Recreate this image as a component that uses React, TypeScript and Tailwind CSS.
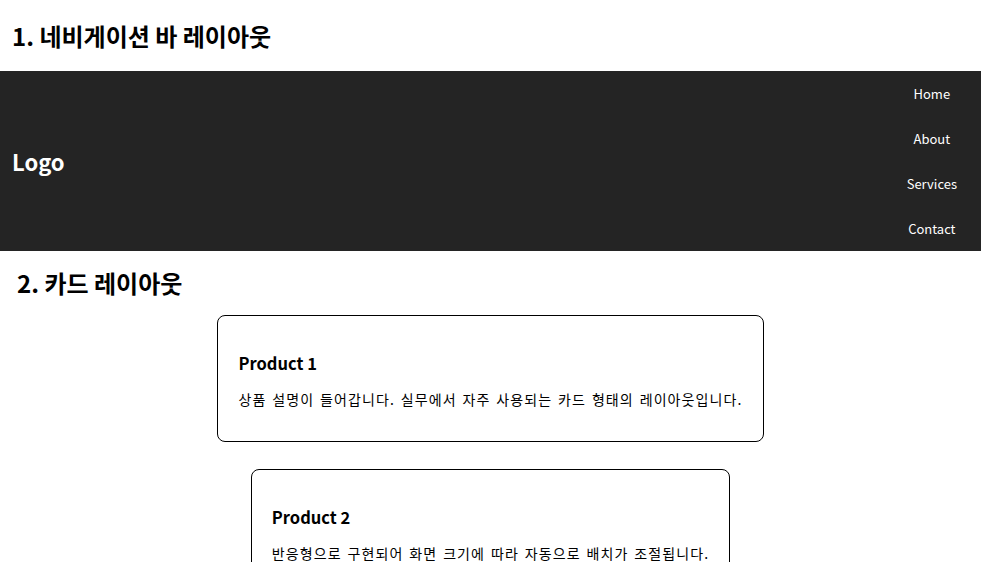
import React from "react";

const font = { fontFamily: '"Noto Sans CJK KR", "Noto Sans", sans-serif' };

const products = [
  { title: "Product 1", desc: "상품 설명이 들어갑니다. 실무에서 자주 사용되는 카드 형태의 레이아웃입니다." },
  { title: "Product 2", desc: "반응형으로 구현되어 화면 크기에 따라 자동으로 배치가 조절됩니다." },
];

export default function App() {
  return (
    <div className="bg-white text-black" style={font}>
      <h2 className="mt-5 mb-5 pl-3 text-2xl font-bold leading-[31px]">1. 네비게이션 바 레이아웃</h2>

      <nav className="flex items-center justify-between bg-[#242424] pl-3 pr-[10px] text-white">
        <div className="text-[22px] font-bold">Logo</div>
        <ul className="flex flex-col items-center">
          {["Home", "About", "Services", "Contact"].map((item) => (
            <li key={item} className="flex h-[45px] items-center px-[14px] text-[13px]">
              {item}
            </li>
          ))}
        </ul>
      </nav>

      <h2 className="mt-[18px] mb-[18px] pl-[17px] text-2xl font-bold leading-7">2. 카드 레이아웃</h2>

      <div className="flex flex-col items-center gap-[27px]">
        {products.map((p) => (
          <div key={p.title} className="rounded-lg border border-black px-5 py-5">
            <h3 className="mt-[17px] text-[16.5px] font-bold leading-5">{p.title}</h3>
            <p className="mt-4 mb-3 text-sm leading-5 tracking-[1.1px] [word-spacing:1.6px]">{p.desc}</p>
          </div>
        ))}
      </div>
    </div>
  );
}
